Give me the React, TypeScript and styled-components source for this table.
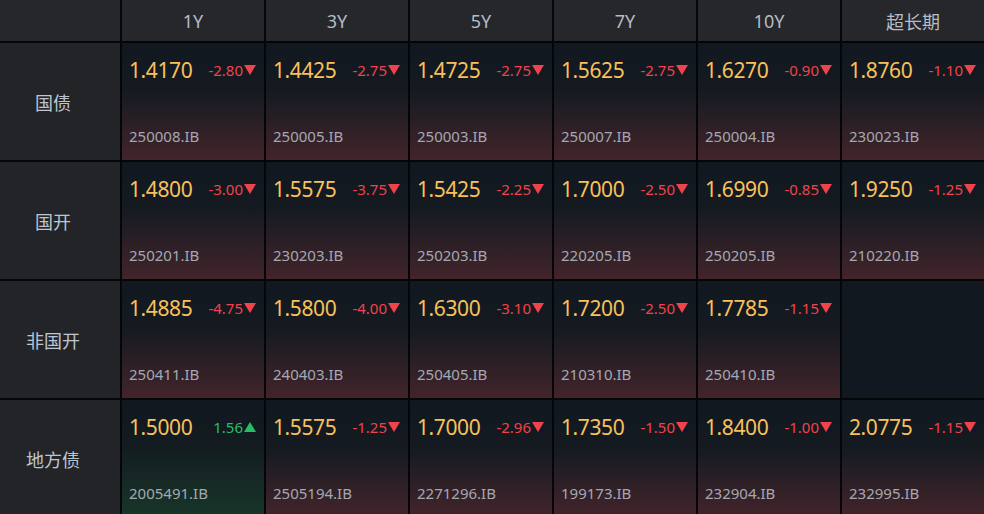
import { FC } from "react";
import styled, { createGlobalStyle } from "styled-components";

const GlobalStyle = createGlobalStyle`
  body {
    margin: 0;
    background: #050607;
    font-family: "Noto Sans", "Noto Sans CJK SC", sans-serif;
  }
`;

type Quote = { value: string; change: string; code: string } | null;

const tenors = ["1Y", "3Y", "5Y", "7Y", "10Y", "超长期"];

const rows: { name: string; quotes: Quote[] }[] = [
  {
    name: "国债",
    quotes: [
      { value: "1.4170", change: "-2.80", code: "250008.IB" },
      { value: "1.4425", change: "-2.75", code: "250005.IB" },
      { value: "1.4725", change: "-2.75", code: "250003.IB" },
      { value: "1.5625", change: "-2.75", code: "250007.IB" },
      { value: "1.6270", change: "-0.90", code: "250004.IB" },
      { value: "1.8760", change: "-1.10", code: "230023.IB" },
    ],
  },
  {
    name: "国开",
    quotes: [
      { value: "1.4800", change: "-3.00", code: "250201.IB" },
      { value: "1.5575", change: "-3.75", code: "230203.IB" },
      { value: "1.5425", change: "-2.25", code: "250203.IB" },
      { value: "1.7000", change: "-2.50", code: "220205.IB" },
      { value: "1.6990", change: "-0.85", code: "250205.IB" },
      { value: "1.9250", change: "-1.25", code: "210220.IB" },
    ],
  },
  {
    name: "非国开",
    quotes: [
      { value: "1.4885", change: "-4.75", code: "250411.IB" },
      { value: "1.5800", change: "-4.00", code: "240403.IB" },
      { value: "1.6300", change: "-3.10", code: "250405.IB" },
      { value: "1.7200", change: "-2.50", code: "210310.IB" },
      { value: "1.7785", change: "-1.15", code: "250410.IB" },
      null,
    ],
  },
  {
    name: "地方债",
    quotes: [
      { value: "1.5000", change: "1.56", code: "2005491.IB" },
      { value: "1.5575", change: "-1.25", code: "2505194.IB" },
      { value: "1.7000", change: "-2.96", code: "2271296.IB" },
      { value: "1.7350", change: "-1.50", code: "199173.IB" },
      { value: "1.8400", change: "-1.00", code: "232904.IB" },
      { value: "2.0775", change: "-1.15", code: "232995.IB" },
    ],
  },
];

const Board = styled.div`
  display: grid;
  grid-template-columns: 120px repeat(6, 142px);
  grid-template-rows: 41px repeat(4, 117px);
  gap: 2px;
  width: 984px;
  height: 514px;
  overflow: hidden;
  background: #050607;
`;

const Corner = styled.div`
  background: #26272b;
`;

const HeadCell = styled.div`
  display: flex;
  align-items: center;
  justify-content: center;
  background: #26272b;
  color: #b5bcc6;
  font-size: 18px;
`;

const RowLabel = styled.div`
  display: flex;
  align-items: center;
  justify-content: center;
  padding-right: 14px;
  background: #232428;
  color: #bcc6d2;
  font-size: 18px;
`;

const Cell = styled.div<{ $up?: boolean; $empty?: boolean }>`
  display: flex;
  flex-direction: column;
  justify-content: space-between;
  padding: 14px 8px 14px 7px;
  background: ${(p) =>
    p.$empty
      ? "#12181f"
      : p.$up
      ? "linear-gradient(180deg, #111820 0%, #131c20 40%, #18362a 100%)"
      : "linear-gradient(180deg, #111820 0%, #151a21 40%, #43242b 100%)"};
`;

const TopLine = styled.div`
  display: flex;
  align-items: center;
  justify-content: space-between;
  height: 26px;
`;

const Value = styled.span`
  color: #f8c15c;
  font-size: 21px;
  letter-spacing: -0.4px;
`;

const Change = styled.span<{ $up?: boolean }>`
  display: flex;
  align-items: center;
  gap: 1px;
  color: ${(p) => (p.$up ? "#26bd66" : "#f0434b")};
  font-size: 15px;
`;

const Code = styled.span`
  color: #a3a9b1;
  font-size: 15px;
  line-height: 20px;
`;

const Arrow: FC<{ up?: boolean }> = ({ up }) => (
  <svg width="12" height="10" viewBox="0 0 12 10">
    <path d={up ? "M6 0 L12 10 L0 10 Z" : "M0 0 L12 0 L6 10 Z"} fill="currentColor" />
  </svg>
);

const QuoteCell: FC<{ quote: Quote }> = ({ quote }) => {
  if (!quote) return <Cell $empty />;
  const up = !quote.change.startsWith("-");
  return (
    <Cell $up={up}>
      <TopLine>
        <Value>{quote.value}</Value>
        <Change $up={up}>
          {quote.change}
          <Arrow up={up} />
        </Change>
      </TopLine>
      <Code>{quote.code}</Code>
    </Cell>
  );
};

const App: FC = () => (
  <>
    <GlobalStyle />
    <Board>
      <Corner />
      {tenors.map((t) => (
        <HeadCell key={t}>{t}</HeadCell>
      ))}
      {rows.map((r) => [
        <RowLabel key={r.name}>{r.name}</RowLabel>,
        ...r.quotes.map((q, i) => <QuoteCell key={r.name + i} quote={q} />),
      ])}
    </Board>
  </>
);

export default App;
